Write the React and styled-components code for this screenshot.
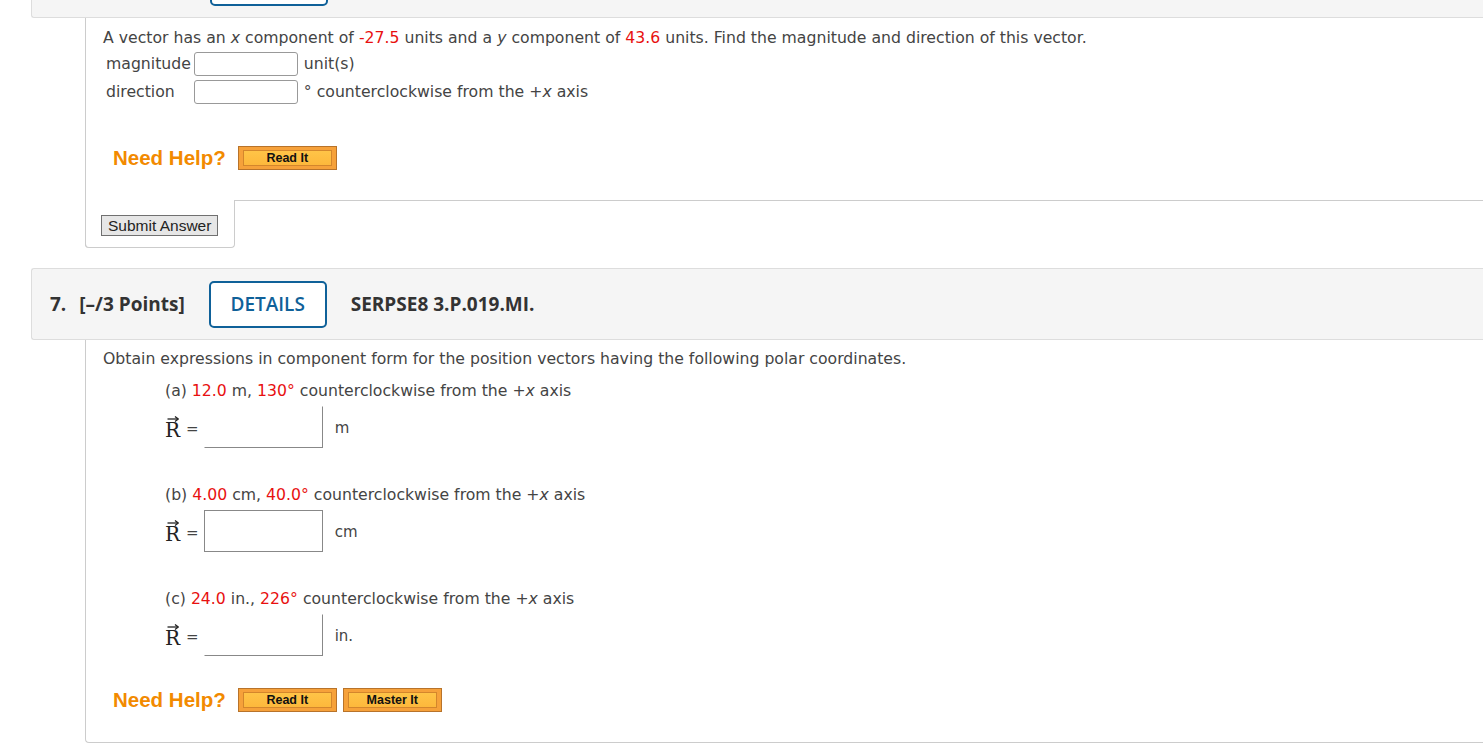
import React from 'react';
import styled, { createGlobalStyle } from 'styled-components';

const GlobalStyle = createGlobalStyle`
    html, body {
        margin: 0;
        padding: 0;
        background: #fff;
        overflow: hidden;
    }
    body {
        font-family: "DejaVu Sans", Verdana, sans-serif;
        color: #444;
    }
`;

const Page = styled.div`
    width: 1483px;
    height: 748px;
    overflow: hidden;
`;

const Header = styled.div`
    margin-left: 31px;
    margin-top: ${(p) => p.$offset || 0}px;
    height: 70px;
    display: flex;
    align-items: center;
    padding-left: 18px;
    background: #f5f5f5;
    border: 1px solid #ddd;
    border-right: none;
    border-radius: 3px 0 0 3px;
    font-family: "Open Sans", sans-serif;
    font-size: 19px;
    font-weight: 700;
    color: #333;
`;

const Number = styled.span`
    margin-right: 13px;
`;

const Points = styled.span`
    margin-right: 24px;
`;

const DetailsButton = styled.button`
    width: 118px;
    height: 47px;
    border: 2px solid #0f6199;
    border-radius: 5px;
    background: #fff;
    color: #0f6199;
    font-family: "Open Sans", sans-serif;
    font-size: 19px;
    font-weight: 600;
    margin-left: ${(p) => p.$left || 0}px;
    margin-right: 24px;
    padding: 0;
`;

const Body = styled.div`
    margin-left: 85px;
    border-left: 1px solid #ccc;
    border-bottom: ${(p) => (p.$closed ? '1px solid #ccc' : 'none')};
    border-bottom-left-radius: 4px;
    margin-bottom: ${(p) => p.$gap || 0}px;
`;

const Content = styled.div`
    padding: ${(p) => p.$top || 0}px 0 ${(p) => p.$bottom || 0}px 17px;
    font-size: 15.7px;
    line-height: 22px;
`;

const Line = styled.div`
    margin-left: ${(p) => p.$indent || 0}px;
    margin-top: ${(p) => p.$top || 0}px;
    white-space: nowrap;
`;

const Red = styled.span`
    color: #e81010;
`;

const Var = styled.i`
    font-style: italic;
`;

const AnswerGrid = styled.div`
    display: grid;
    grid-template-columns: auto auto 1fr;
    align-items: center;
    row-gap: 4px;
    margin: 3px 0 0 3px;
`;

const GridLabel = styled.span`
    margin-right: 3px;
`;

const SmallInput = styled.input`
    width: 104px;
    height: 24px;
    box-sizing: border-box;
    border: 1px solid #999;
    border-radius: 3px;
    margin-right: 6px;
`;

const HelpRow = styled.div`
    display: flex;
    align-items: center;
    gap: 6px;
    margin: ${(p) => p.$top || 0}px 0 0 10px;
`;

const HelpLabel = styled.span`
    font-family: "Liberation Sans", Arial, sans-serif;
    font-weight: 700;
    font-size: 20.5px;
    color: #f28a00;
    margin-right: 6px;
`;

const HelpButton = styled.button`
    width: 99px;
    height: 24px;
    box-sizing: border-box;
    padding: 3px 4px;
    border: 1px solid #b8732a;
    background: #f6a13a;
    display: flex;
`;

const HelpInner = styled.span`
    flex: 1;
    display: flex;
    align-items: center;
    justify-content: center;
    border: 1px solid #d4862c;
    background: linear-gradient(#ffc447, #fdb83c);
    font-family: "Liberation Sans", Arial, sans-serif;
    font-weight: 700;
    font-size: 12.5px;
    color: #111;
`;

const Footer = styled.div`
    display: flex;
    margin-top: ${(p) => p.$top || 0}px;
`;

const SubmitCell = styled.div`
    width: 150px;
    height: 48px;
    display: flex;
    align-items: center;
    padding-left: 15px;
    box-sizing: border-box;
    border: 1px solid #ccc;
    border-top: none;
    border-bottom-right-radius: 4px;
    border-bottom-left-radius: 4px;
    margin-left: -1px;
`;

const Filler = styled.div`
    flex: 1;
    border-top: 1px solid #ccc;
`;

const SubmitButton = styled.button`
    height: 21px;
    padding: 0 6px;
    border: 1px solid #707070;
    background: #e6e6e6;
    font-family: "Liberation Sans", Arial, sans-serif;
    font-size: 15.5px;
    color: #222;
    margin-top: 4px;
`;

const PartRow = styled.div`
    display: flex;
    align-items: center;
    margin: ${(p) => p.$top || 0}px 0 0 62px;
`;

const Vec = styled.span`
    display: inline-flex;
    flex-direction: column;
    align-items: center;
    font-family: "DejaVu Serif", "Liberation Serif", serif;
    font-size: 20px;
    line-height: 16px;
    color: #222;
`;

const Equals = styled.span`
    font-family: "DejaVu Sans", sans-serif;
    font-size: 15px;
    margin: 3px 5px 0 6px;
    color: #444;
`;

const BigInput = styled.input`
    width: 119px;
    height: 42px;
    box-sizing: border-box;
    border: 1px solid #888;
    border-top-color: ${(p) => (p.$full ? '#888' : 'transparent')};
    border-left-color: ${(p) => (p.$full ? '#888' : 'transparent')};
    border-radius: 0;
    margin-right: 12px;
`;

const Unit = styled.span`
    font-size: 15px;
    margin-top: 2px;
`;

const Arrow = () => (
    <svg width="12" height="6" viewBox="0 0 12 6">
        <path d="M0.5 3 H11" stroke="#222" strokeWidth="1.3" />
        <path d="M8 0.5 L11.2 3 L8 5.5" fill="none" stroke="#222" strokeWidth="1.3" />
    </svg>
);

const VectorR = () => (
    <Vec>
        <Arrow />
        R
    </Vec>
);

const Part = ({ letter, a, unitA, b, unit, top, full }) => (
    <>
        <Line $indent={62} $top={top}>
            ({letter}) <Red>{a}</Red> {unitA}, <Red>{b}</Red> counterclockwise from the +<Var>x</Var> axis
        </Line>
        <PartRow $top={4}>
            <VectorR />
            <Equals>=</Equals>
            <BigInput $full={full} />
            <Unit>{unit}</Unit>
        </PartRow>
    </>
);

const App = () => (
    <Page>
        <GlobalStyle />
        <Header $offset={-54}>
            <DetailsButton $left={160} aria-label="DETAILS" />
        </Header>
        <Body $gap={20}>
            <Content $top={9}>
                <Line>
                    A vector has an <Var>x</Var> component of <Red>-27.5</Red> units and a <Var>y</Var> component of <Red>43.6</Red> units. Find the magnitude and direction of this vector.
                </Line>
                <AnswerGrid>
                    <GridLabel>magnitude</GridLabel>
                    <SmallInput />
                    <span>unit(s)</span>
                    <GridLabel>direction</GridLabel>
                    <SmallInput />
                    <span>° counterclockwise from the +<Var>x</Var> axis</span>
                </AnswerGrid>
                <HelpRow $top={42}>
                    <HelpLabel>Need Help?</HelpLabel>
                    <HelpButton><HelpInner>Read It</HelpInner></HelpButton>
                </HelpRow>
            </Content>
            <Footer $top={30}>
                <SubmitCell>
                    <SubmitButton>Submit Answer</SubmitButton>
                </SubmitCell>
                <Filler />
            </Footer>
        </Body>
        <Header>
            <Number>7.</Number>
            <Points>[–/3 Points]</Points>
            <DetailsButton>DETAILS</DetailsButton>
            <span>SERPSE8 3.P.019.MI.</span>
        </Header>
        <Body $closed>
            <Content $top={8} $bottom={30}>
                <Line>
                    Obtain expressions in component form for the position vectors having the following polar coordinates.
                </Line>
                <Part letter="a" a="12.0" unitA="m" b="130°" unit="m" top={10} />
                <Part letter="b" a="4.00" unitA="cm" b="40.0°" unit="cm" top={36} full />
                <Part letter="c" a="24.0" unitA="in." b="226°" unit="in." top={36} />
                <HelpRow $top={32}>
                    <HelpLabel>Need Help?</HelpLabel>
                    <HelpButton><HelpInner>Read It</HelpInner></HelpButton>
                    <HelpButton><HelpInner>Master It</HelpInner></HelpButton>
                </HelpRow>
            </Content>
        </Body>
    </Page>
);

export default App;
